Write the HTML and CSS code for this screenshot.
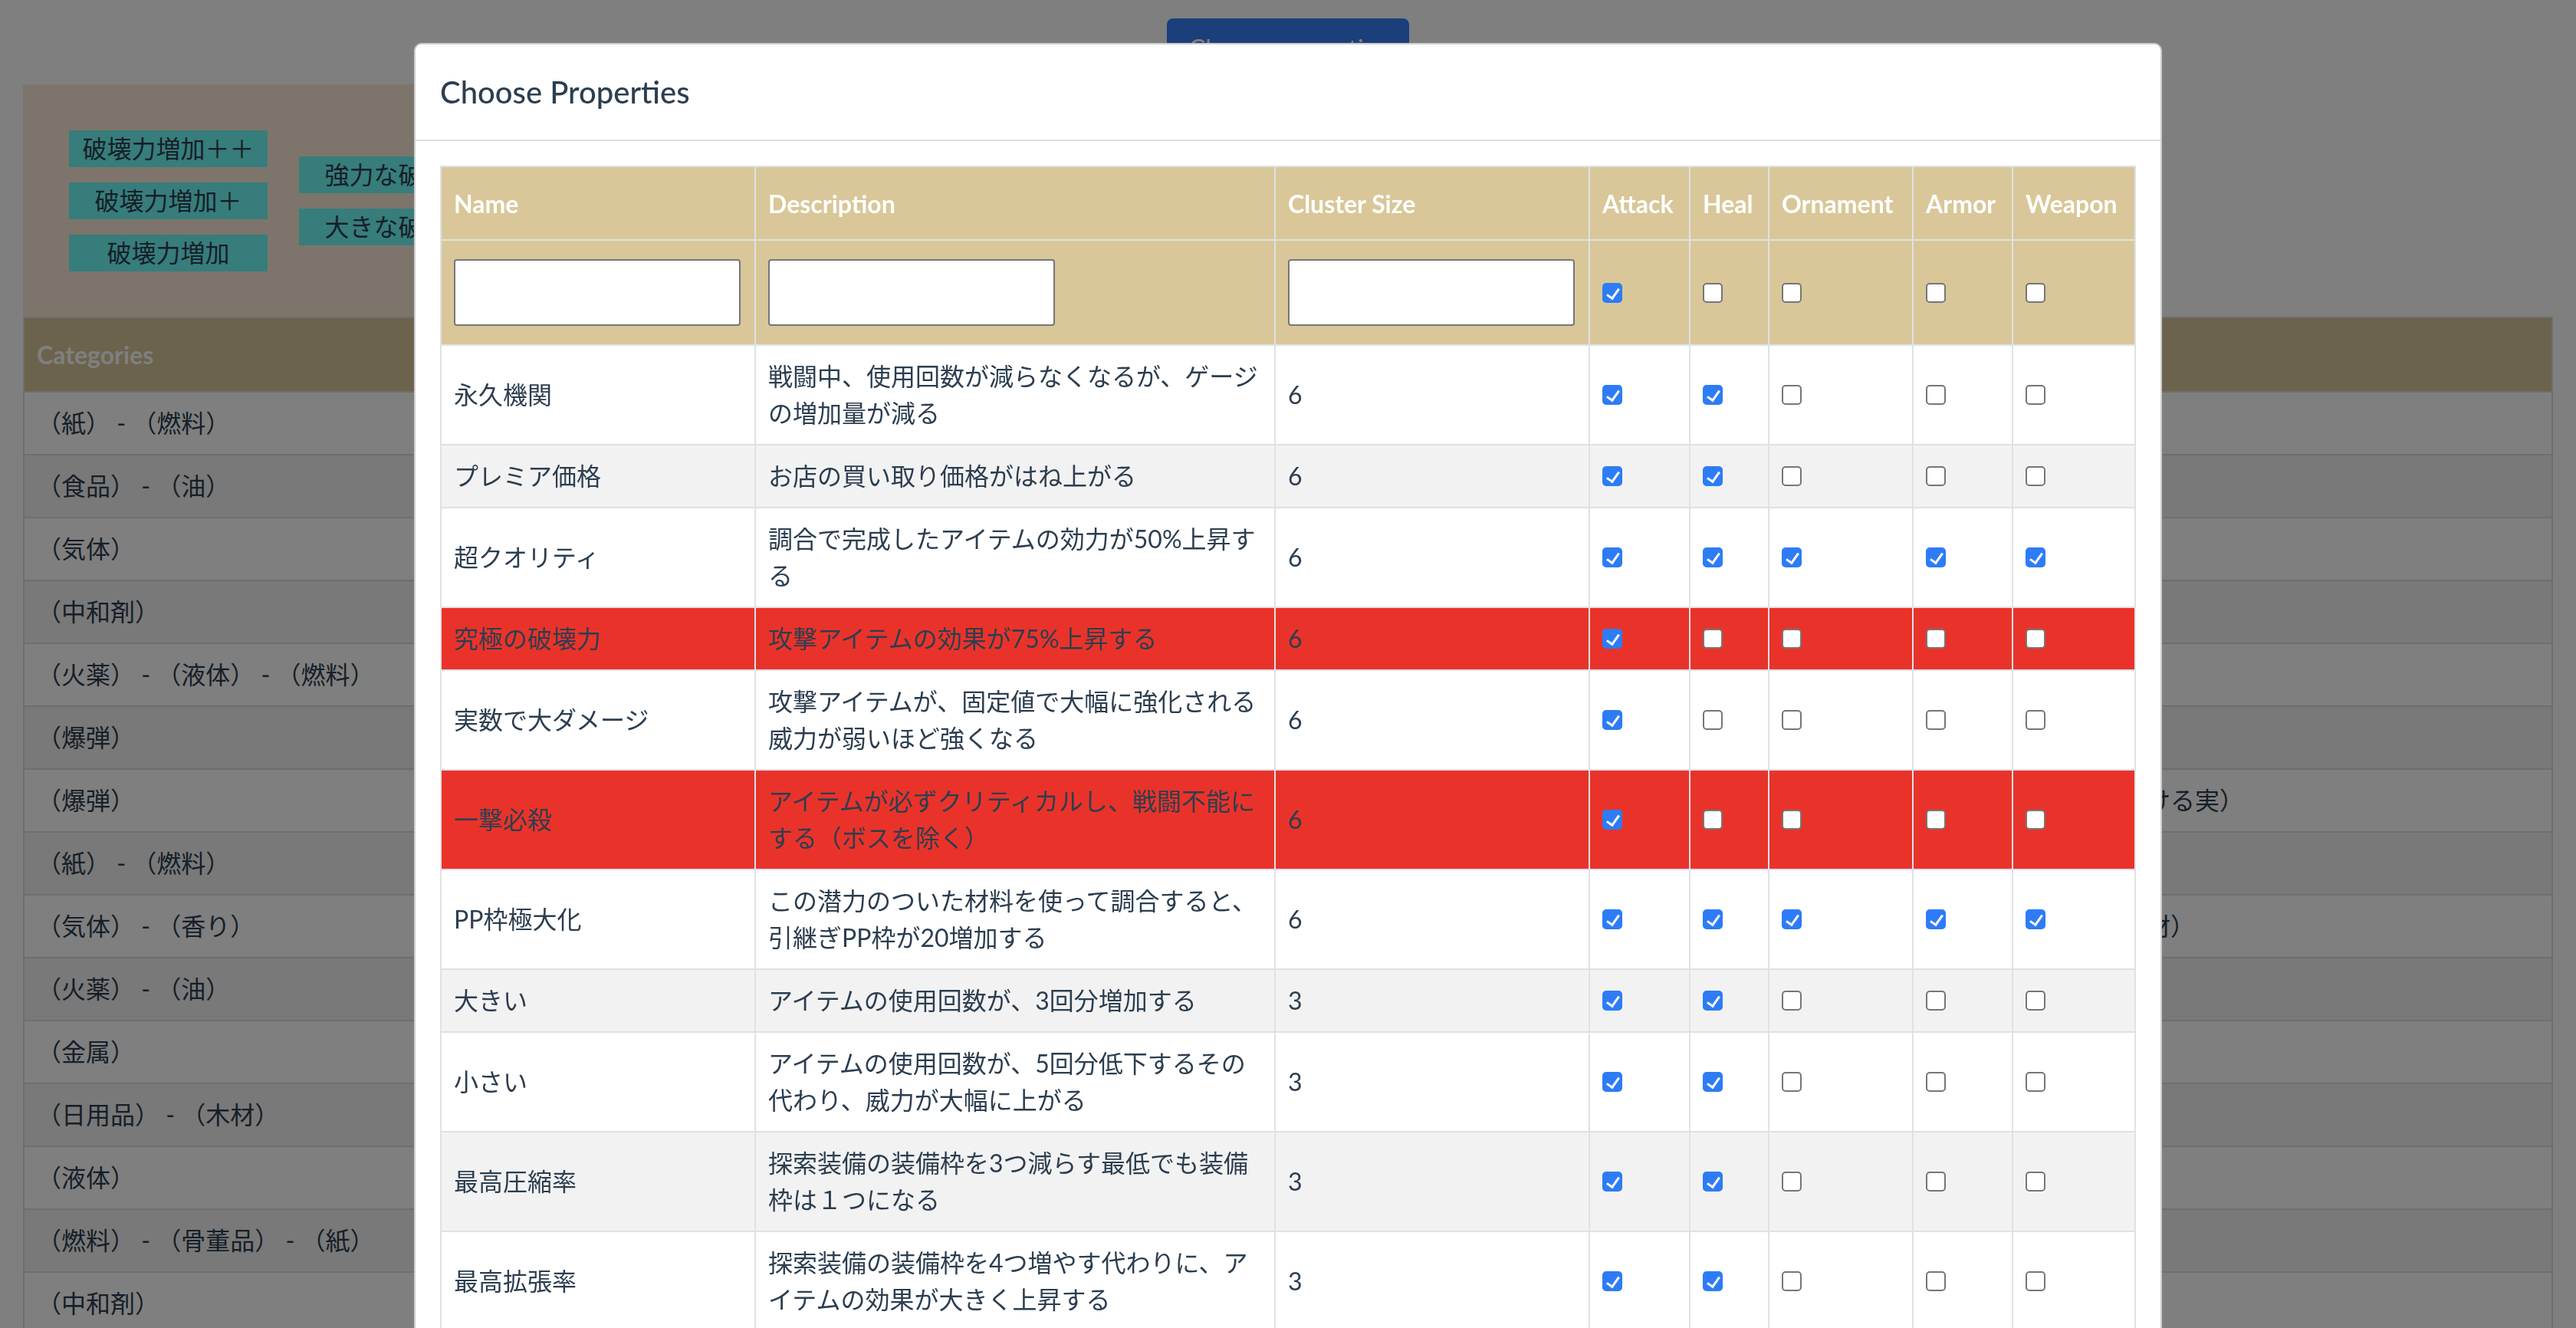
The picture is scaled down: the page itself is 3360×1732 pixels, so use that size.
FILE: index.html
```html
<!DOCTYPE html>
<html lang="ja">
<head>
<meta charset="utf-8">
<title>Choose Properties</title>
<link rel="stylesheet" href="styles.css">
</head>
<body>
<div class="page">
  <div class="toolbar">
    <button class="btn-primary" type="button">Choose properties</button>
  </div>
  <div class="tag-panel">
    <div class="tag-col">
      <span class="tag">破壊力増加＋＋</span>
      <span class="tag">破壊力増加＋</span>
      <span class="tag">破壊力増加</span>
    </div>
    <div class="tag-col">
      <span class="tag">強力な破壊力</span>
      <span class="tag">大きな破壊力</span>
    </div>
  </div>
  <table class="cat-table">
    <colgroup><col class="cat-col-main"><col></colgroup>
    <thead>
      <tr><th>Categories</th><th></th></tr>
    </thead>
    <tbody>
      <tr><td>（紙） - （燃料）</td><td></td></tr>
      <tr><td>（食品） - （油）</td><td></td></tr>
      <tr><td>（気体）</td><td></td></tr>
      <tr><td>（中和剤）</td><td></td></tr>
      <tr><td>（火薬） - （液体） - （燃料）</td><td></td></tr>
      <tr><td>（爆弾）</td><td></td></tr>
      <tr><td>（爆弾）</td><td>（はじける実）</td></tr>
      <tr><td>（紙） - （燃料）</td><td></td></tr>
      <tr><td>（気体） - （香り）</td><td>（香木材）</td></tr>
      <tr><td>（火薬） - （油）</td><td></td></tr>
      <tr><td>（金属）</td><td></td></tr>
      <tr><td>（日用品） - （木材）</td><td></td></tr>
      <tr><td>（液体）</td><td></td></tr>
      <tr><td>（燃料） - （骨董品） - （紙）</td><td></td></tr>
      <tr><td>（中和剤）</td><td></td></tr>
    </tbody>
  </table>
</div>

<div class="backdrop"></div>

<div class="modal">
  <div class="modal-dialog">
    <div class="modal-content">
      <div class="modal-header">
        <h5 class="modal-title">Choose Properties</h5>
      </div>
      <div class="modal-body">
        <table class="prop-table">
          <thead>
            <tr class="head-row">
              <th class="c-name">Name</th>
              <th class="c-desc">Description</th>
              <th class="c-size">Cluster Size</th>
              <th class="c-attack">Attack</th>
              <th class="c-heal">Heal</th>
              <th class="c-orn">Ornament</th>
              <th class="c-armor">Armor</th>
              <th class="c-weapon">Weapon</th>
            </tr>
            <tr class="filter-row">
              <td><input class="filter-input" type="text"></td>
              <td><input class="filter-input" type="text"></td>
              <td><input class="filter-input" type="text"></td>
              <td><input type="checkbox" checked></td>
              <td><input type="checkbox"></td>
              <td><input type="checkbox"></td>
              <td><input type="checkbox"></td>
              <td><input type="checkbox"></td>
            </tr>
          </thead>
          <tbody>
            <tr>
              <td>永久機関</td>
              <td>戦闘中、使用回数が減らなくなるが、ゲージの増加量が減る</td>
              <td>6</td>
              <td><input type="checkbox" checked></td>
              <td><input type="checkbox" checked></td>
              <td><input type="checkbox"></td>
              <td><input type="checkbox"></td>
              <td><input type="checkbox"></td>
            </tr>
            <tr>
              <td>プレミア価格</td>
              <td>お店の買い取り価格がはね上がる</td>
              <td>6</td>
              <td><input type="checkbox" checked></td>
              <td><input type="checkbox" checked></td>
              <td><input type="checkbox"></td>
              <td><input type="checkbox"></td>
              <td><input type="checkbox"></td>
            </tr>
            <tr>
              <td>超クオリティ</td>
              <td>調合で完成したアイテムの効力が50%上昇する</td>
              <td>6</td>
              <td><input type="checkbox" checked></td>
              <td><input type="checkbox" checked></td>
              <td><input type="checkbox" checked></td>
              <td><input type="checkbox" checked></td>
              <td><input type="checkbox" checked></td>
            </tr>
            <tr class="danger">
              <td>究極の破壊力</td>
              <td>攻撃アイテムの効果が75%上昇する</td>
              <td>6</td>
              <td><input type="checkbox" checked></td>
              <td><input type="checkbox"></td>
              <td><input type="checkbox"></td>
              <td><input type="checkbox"></td>
              <td><input type="checkbox"></td>
            </tr>
            <tr>
              <td>実数で大ダメージ</td>
              <td>攻撃アイテムが、固定値で大幅に強化される威力が弱いほど強くなる</td>
              <td>6</td>
              <td><input type="checkbox" checked></td>
              <td><input type="checkbox"></td>
              <td><input type="checkbox"></td>
              <td><input type="checkbox"></td>
              <td><input type="checkbox"></td>
            </tr>
            <tr class="danger">
              <td>一撃必殺</td>
              <td>アイテムが必ずクリティカルし、戦闘不能にする（ボスを除く）</td>
              <td>6</td>
              <td><input type="checkbox" checked></td>
              <td><input type="checkbox"></td>
              <td><input type="checkbox"></td>
              <td><input type="checkbox"></td>
              <td><input type="checkbox"></td>
            </tr>
            <tr>
              <td>PP枠極大化</td>
              <td>この潜力のついた材料を使って調合すると、引継ぎPP枠が20増加する</td>
              <td>6</td>
              <td><input type="checkbox" checked></td>
              <td><input type="checkbox" checked></td>
              <td><input type="checkbox" checked></td>
              <td><input type="checkbox" checked></td>
              <td><input type="checkbox" checked></td>
            </tr>
            <tr>
              <td>大きい</td>
              <td>アイテムの使用回数が、3回分増加する</td>
              <td>3</td>
              <td><input type="checkbox" checked></td>
              <td><input type="checkbox" checked></td>
              <td><input type="checkbox"></td>
              <td><input type="checkbox"></td>
              <td><input type="checkbox"></td>
            </tr>
            <tr>
              <td>小さい</td>
              <td>アイテムの使用回数が、5回分低下するその代わり、威力が大幅に上がる</td>
              <td>3</td>
              <td><input type="checkbox" checked></td>
              <td><input type="checkbox" checked></td>
              <td><input type="checkbox"></td>
              <td><input type="checkbox"></td>
              <td><input type="checkbox"></td>
            </tr>
            <tr>
              <td>最高圧縮率</td>
              <td>探索装備の装備枠を3つ減らす最低でも装備枠は１つになる</td>
              <td>3</td>
              <td><input type="checkbox" checked></td>
              <td><input type="checkbox" checked></td>
              <td><input type="checkbox"></td>
              <td><input type="checkbox"></td>
              <td><input type="checkbox"></td>
            </tr>
            <tr>
              <td>最高拡張率</td>
              <td>探索装備の装備枠を4つ増やす代わりに、アイテムの効果が大きく上昇する</td>
              <td>3</td>
              <td><input type="checkbox" checked></td>
              <td><input type="checkbox" checked></td>
              <td><input type="checkbox"></td>
              <td><input type="checkbox"></td>
              <td><input type="checkbox"></td>
            </tr>
          </tbody>
        </table>
      </div>
    </div>
  </div>
</div>
</body>
</html>
```
FILE: styles.css
```css
* {
  box-sizing: border-box;
}

html,
body {
  margin: 0;
  height: 100%;
  overflow: hidden;
}

body {
  background: #ffffff;
  color: #2c3e50;
  font-family: Lato, "Noto Sans CJK JP", sans-serif;
  font-size: 32px;
  line-height: 48px;
}

/* ---------- background page ---------- */

.page {
  padding: 24px 30px 0;
}

.toolbar {
  display: flex;
  justify-content: center;
  margin-bottom: 10px;
}

.btn-primary {
  width: 316px;
  height: 76px;
  border: 0;
  border-radius: 8px;
  background: #347ef6;
  color: #ffffff;
  font-family: inherit;
  font-size: 32px;
}

.tag-panel {
  display: flex;
  align-items: center;
  gap: 41px;
  width: 1400px;
  height: 303px;
  padding-left: 60px;
  background: #faebd7;
}

.tag-col {
  display: flex;
  flex-direction: column;
  gap: 20px;
}

.tag {
  display: block;
  width: 259px;
  height: 48px;
  line-height: 48px;
  text-align: center;
  background: #6efaf6;
  color: #2c3e50;
}

.cat-table {
  width: 100%;
  table-layout: fixed;
  border-collapse: collapse;
  border: 2px solid #dddddd;
}

.cat-col-main {
  width: 2656px;
}

.cat-table th {
  padding: 24px 16px 23px;
  background: #d9c799;
  color: #ffffff;
  font-weight: 700;
  text-align: left;
}

.cat-table td {
  padding: 16px;
  border-top: 2px solid #dddddd;
  white-space: nowrap;
  overflow: hidden;
}

.cat-table tbody tr:nth-child(even) td {
  background: #f2f2f2;
}

/* ---------- modal ---------- */

.backdrop {
  position: fixed;
  inset: 0;
  background: rgba(0, 0, 0, 0.5);
}

.modal {
  position: fixed;
  inset: 0;
  overflow: hidden;
}

.modal-dialog {
  width: 2280px;
  margin: 56px auto 0;
}

.modal-content {
  background: #ffffff;
  border: 2px solid rgba(0, 0, 0, 0.2);
  border-radius: 10px;
}

.modal-header {
  padding: 32px;
  border-bottom: 2px solid #dee2e6;
}

.modal-title {
  margin: 0;
  font-size: 40px;
  line-height: 60px;
  font-weight: 500;
  color: #2c3e50;
}

.modal-body {
  padding: 32px;
}

.prop-table {
  width: 100%;
  table-layout: fixed;
  border-collapse: separate;
  border-spacing: 0;
  border-top: 2px solid #dee2e6;
  border-right: 2px solid #dee2e6;
}

.prop-table th,
.prop-table td {
  padding: 16px;
  border-left: 2px solid #dee2e6;
  border-bottom: 2px solid #dee2e6;
  text-align: left;
  vertical-align: middle;
}

.c-name { width: 410px; }
.c-desc { width: 678px; }
.c-size { width: 410px; }
.c-attack { width: 131px; }
.c-heal { width: 103px; }
.c-orn { width: 188px; }
.c-armor { width: 130px; }
.c-weapon { width: 160px; }

.head-row th {
  padding: 24px 16px 22px;
  background: #d9c799;
  color: #ffffff;
  font-weight: 700;
  white-space: nowrap;
}

.filter-row td {
  padding: 24px 16px;
  background: #d9c799;
}

.filter-input {
  display: block;
  width: 374px;
  height: 87px;
  padding: 0 6px;
  border: 2px solid #767676;
  border-radius: 4px;
  background: #ffffff;
  font-family: inherit;
  font-size: 32px;
}

.prop-table input[type="checkbox"] {
  -webkit-appearance: none;
  appearance: none;
  position: relative;
  display: block;
  width: 26px;
  height: 26px;
  margin: 0;
  border: 2px solid #767676;
  border-radius: 5px;
  background: #ffffff;
}

.prop-table input[type="checkbox"]:checked {
  border-color: #2d7cf6;
  background: #2d7cf6;
}

.prop-table input[type="checkbox"]:checked::after {
  content: "";
  position: absolute;
  left: 7px;
  top: 2px;
  width: 7px;
  height: 14px;
  border: solid #ffffff;
  border-width: 0 3px 3px 0;
  transform: rotate(35deg);
}

.prop-table tbody tr:nth-child(even) td {
  background: #f2f2f2;
}

.prop-table tbody tr.danger td {
  background: #e9332a;
}
```
